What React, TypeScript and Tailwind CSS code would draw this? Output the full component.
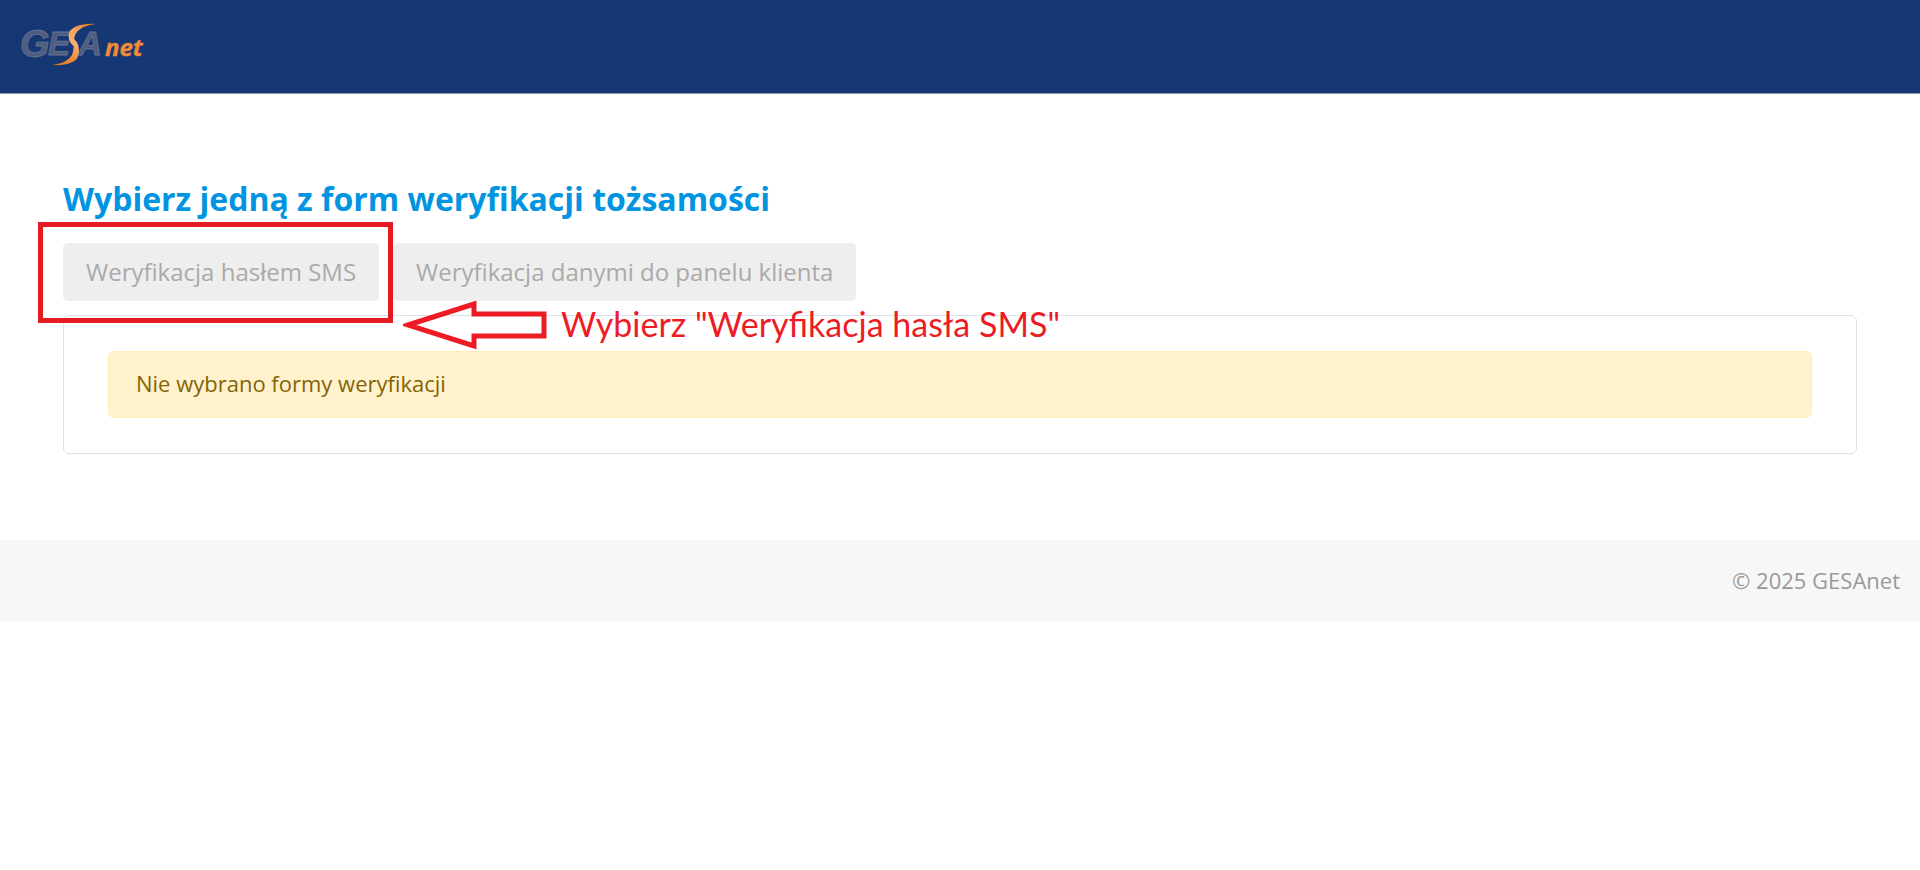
import React from 'react';

interface VerificationMethod {
    id: string;
    label: string;
    highlighted?: boolean;
}

const methods: VerificationMethod[] = [
    { id: 'sms', label: 'Weryfikacja hasłem SMS', highlighted: true },
    { id: 'panel', label: 'Weryfikacja danymi do panelu klienta' },
];

const Logo: React.FC = () => (
    <svg width="140" height="60" viewBox="-8 -8 140 60" role="img" aria-label="GESAnet">
        <defs>
            <linearGradient id="swooshTop" x1="0" y1="1" x2="1" y2="0">
                <stop offset="0" stopColor="#f9b27c" />
                <stop offset="0.5" stopColor="#f6a25c" />
                <stop offset="1" stopColor="#e0700f" />
            </linearGradient>
            <linearGradient id="swooshBottom" x1="0" y1="1" x2="1" y2="0">
                <stop offset="0" stopColor="#e0700f" />
                <stop offset="0.5" stopColor="#f08c36" />
                <stop offset="1" stopColor="#fbc08f" />
            </linearGradient>
        </defs>
        <g fontStyle="italic" fontWeight="700">
            <g fontFamily="'Liberation Sans', Arial, sans-serif" fill="#4f5d80" stroke="#65718e" strokeWidth="0.8">
                <text x="0" y="37" fontSize="38">G</text>
                <text x="28" y="35" fontSize="33">E</text>
                <text x="58" y="35" fontSize="33">A</text>
            </g>
            <text x="85" y="36" fontSize="24" fontFamily="'Open Sans', sans-serif" fill="#f08c36" stroke="#f08c36" strokeWidth="0.4">
                net
            </text>
        </g>
        <path d="M75 4 C62 3 51 7 49 13 C48 18 49 23 55 27 C53 20 54 14 59 10 C64 6 70 5 75 4Z" fill="url(#swooshTop)" />
        <path d="M32 45 C46 46 57 42 58 36 C60 29 59 23 53 18 C54 24 54 30 52 35 C48 41 41 44 32 45Z" fill="url(#swooshBottom)" />
    </svg>
);

/* Czerwona strzałka z podpowiedzią */
const Hint: React.FC = () => (
    <div className="pointer-events-none absolute left-full top-14 ml-6 flex items-center gap-[14px] whitespace-nowrap text-[#ed1c24]">
        <svg width="144" height="50" viewBox="0 0 144 50" fill="none" stroke="currentColor" strokeWidth="5" aria-hidden="true">
            <path d="M5 26 L71 5 V15 H141 V37 H71 V47 Z" />
        </svg>
        <span className="font-[Lato,sans-serif] text-[34px] leading-none">Wybierz "Weryfikacja hasła SMS"</span>
    </div>
);

const App: React.FC = () => {
    return (
        <div className="bg-white font-['Open_Sans',sans-serif]">
            <header className="flex h-[94px] items-start border-b border-[#8f9cad] bg-[#153875] px-3 pt-3">
                <a href="#">
                    <Logo />
                </a>
            </header>

            <main className="px-[63px] pb-[86px] pt-[83px]">
                <h1 className="mb-[22px] text-[32px] font-bold leading-[44px] text-[#0094e1]">
                    Wybierz jedną z form weryfikacji tożsamości
                </h1>

                <div className="flex gap-[14px]">
                    {methods.map((method) => (
                        <div key={method.id} className="relative">
                            <button
                                type="button"
                                className="h-[58px] rounded-[5px] bg-[#eeeeee] px-[23px] text-2xl text-[#aaaaaa]"
                            >
                                {method.label}
                            </button>
                            {method.highlighted && (
                                <>
                                    <div className="pointer-events-none absolute -bottom-[22px] -left-[25px] -right-[14px] -top-[21px] z-10 border-5 border-[#e31b23]" />
                                    <Hint />
                                </>
                            )}
                        </div>
                    ))}
                </div>

                <section className="mt-[14px] rounded-md border border-[#dee2e6] px-11 py-[35px]">
                    <div
                        role="alert"
                        className="rounded-md border border-[#ffeeba] bg-[#fff2cd] px-[27px] pb-[17px] pt-[15px] text-[22px] leading-[33px] text-[#856404]"
                    >
                        Nie wybrano formy weryfikacji
                    </div>
                </section>
            </main>

            <footer className="bg-[#f7f7f7] px-5 py-6 text-right text-[22px] leading-[33px] text-[#999999]">
                © 2025 GESAnet
            </footer>
        </div>
    );
};

export default App;
